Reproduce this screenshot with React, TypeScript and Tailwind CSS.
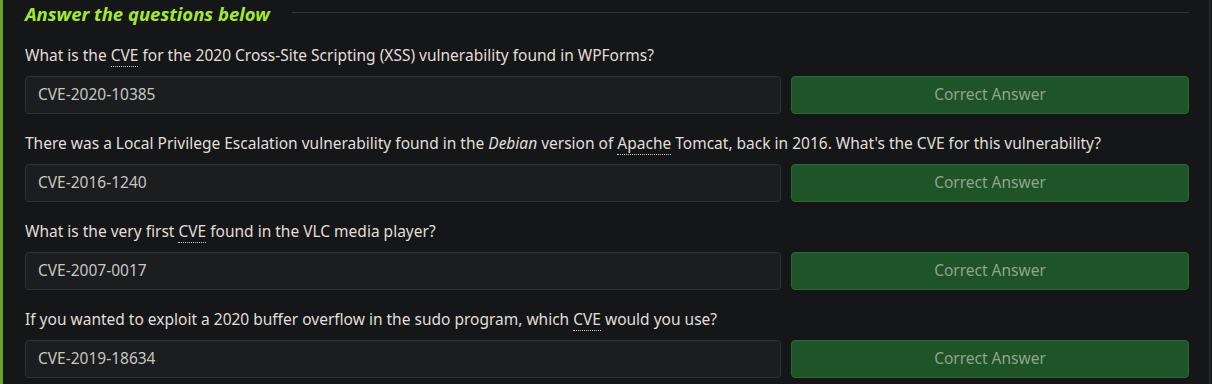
const questions = [
  {
    q: (
      <>
        What is the <abbr className="no-underline border-b border-dotted border-[#cfcac2]">CVE</abbr> for the 2020 Cross-Site Scripting (XSS) vulnerability found in WPForms?
      </>
    ),
    a: 'CVE-2020-10385',
  },
  {
    q: (
      <>
        There was a Local Privilege Escalation vulnerability found in the <em>Debian</em> version of{' '}
        <abbr className="no-underline border-b border-dotted border-[#cfcac2]">Apache</abbr> Tomcat, back in 2016. What's the CVE for this vulnerability?
      </>
    ),
    a: 'CVE-2016-1240',
  },
  {
    q: (
      <>
        What is the very first <abbr className="no-underline border-b border-dotted border-[#cfcac2]">CVE</abbr> found in the VLC media player?
      </>
    ),
    a: 'CVE-2007-0017',
  },
  {
    q: (
      <>
        If you wanted to exploit a 2020 buffer overflow in the sudo program, which{' '}
        <abbr className="no-underline border-b border-dotted border-[#cfcac2]">CVE</abbr> would you use?
      </>
    ),
    a: 'CVE-2019-18634',
  },
]

export default function App() {
  return (
    <div
      className="flex w-[1212px] h-[384px] overflow-hidden bg-[#151617] text-[#e2ded8]"
      style={{ fontFamily: '"Noto Sans", "Open Sans", sans-serif' }}
    >
      <div className="flex-1 border-l-[3px] border-[#6aa12a] border-r border-r-[#2a2b2d] pl-[22px] pr-[20px]">
        {/* Heading */}
        <div className="flex items-center gap-[22px] pt-[2px]">
          <h3 className="text-[18.5px] leading-[24px] font-bold italic text-[#a3ea2a] whitespace-nowrap">
            Answer the questions below
          </h3>
          <div className="flex-1 h-px bg-[#323334] -mt-[4px]" />
        </div>

        {/* Questions */}
        {questions.map((item, i) => (
          <div key={i} className="mt-[19px]">
            <p className="text-[15.5px] leading-[20px] whitespace-nowrap">{item.q}</p>
            <div className="flex gap-[10px] mt-[11px]">
              <div className="w-[756px] h-[38px] flex items-center px-3 rounded-[4px] border border-[#303134] bg-[#1c1d1f] text-[15.5px] text-[#c9c5bf]">
                {item.a}
              </div>
              <div className="flex-1 h-[38px] flex items-center justify-center rounded-[4px] border border-[#286a30] bg-[#1f5328] text-[15.5px] text-[#8ea58c]">
                Correct Answer
              </div>
            </div>
          </div>
        ))}
      </div>
      <div className="w-[2px] bg-[#1b1c1d]" />
    </div>
  )
}
